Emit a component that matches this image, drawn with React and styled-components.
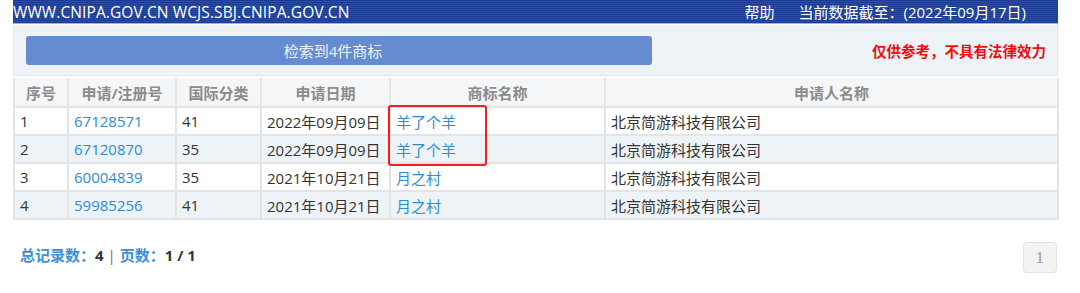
import React from "react";
import styled, { createGlobalStyle } from "styled-components";

const Global = createGlobalStyle`
  html, body { margin: 0; padding: 0; background: #fff; }
  body { font-family: "Open Sans", "Noto Sans CJK SC", sans-serif; }
`;

const Page = styled.div`
  width: 1045px;
  margin-left: 13px;
`;

const TopBar = styled.div`
  height: 23px;
  display: flex;
  align-items: center;
  justify-content: space-between;
  color: #fff;
  font-size: 15px;
  background: repeating-linear-gradient(
    to bottom,
    #1b3a93 0px,
    #1b3a93 1px,
    #2a4fa6 1px,
    #2a4fa6 2px
  );
  border-bottom: 1px solid #9fb2dc;
`;

const Sites = styled.span`
  white-space: nowrap;
  font-size: 15.5px;
  letter-spacing: 0.1px;
`;

const TopRight = styled.div`
  display: flex;
  gap: 24px;
  padding-right: 32px;
  white-space: nowrap;
`;

const SearchPanel = styled.div`
  margin-top: 1px;
  height: 51px;
  display: flex;
  align-items: center;
  justify-content: space-between;
  padding: 0 11px 0 12px;
  background: #eef3f8;
  border: 1px solid #e2e6ea;
  border-top: none;
  box-sizing: border-box;
`;

const ResultButton = styled.div`
  width: 626px;
  height: 29px;
  border-radius: 3px;
  background: #678bd0;
  color: #eef2fb;
  font-size: 15px;
  display: flex;
  align-items: center;
  justify-content: center;
  padding-right: 12px;
  box-sizing: border-box;
`;

const Disclaimer = styled.span`
  color: #f20c0c;
  font-size: 14.5px;
  font-weight: bold;
`;

const TableWrap = styled.div`
  position: relative;
  margin-top: 2px;
`;

const Table = styled.table`
  width: 1045px;
  border-collapse: collapse;
  table-layout: fixed;
  font-size: 15px;
`;

const Th = styled.th`
  height: 28px;
  padding: 0;
  background: #f4f6f7;
  color: #8c8c8c;
  font-weight: bold;
  font-size: 15px;
  text-align: center;
  border: 2px solid #e2e4e6;
  border-top: none;
`;

const Tr = styled.tr`
  background: ${(p) => (p.$alt ? "#eef3f8" : "#fff")};
`;

const Td = styled.td`
  height: 26px;
  padding: 0 0 0 5px;
  color: #333;
  border: 2px solid #e2e4e6;
  white-space: nowrap;
  overflow: hidden;
`;

const Link = styled.span`
  color: #2f8ad6;
`;

const Highlight = styled.div`
  position: absolute;
  left: 375px;
  top: 27px;
  width: 95px;
  height: 57px;
  border: 2px solid #f02020;
  border-radius: 3px;
  pointer-events: none;
`;

const Footer = styled.div`
  display: flex;
  justify-content: space-between;
  align-items: center;
  margin-top: 22px;
  padding-left: 7px;
`;

const Summary = styled.div`
  font-size: 15px;
  font-weight: bold;
  color: #3d8fd9;
  margin-top: -6px;
`;

const Value = styled.span`
  color: #333;
`;

const Sep = styled.span`
  color: #9a6a3a;
  font-weight: normal;
`;

const PageBtn = styled.div`
  width: 34px;
  height: 31px;
  margin-right: 1px;
  box-sizing: border-box;
  border: 1px solid #e2e2e2;
  border-radius: 4px;
  background: #f3f3f3;
  color: #a0a0a0;
  font-size: 15px;
  display: flex;
  align-items: center;
  justify-content: center;
  font-family: "DejaVu Serif", serif;
`;

const rows = [
  ["1", "67128571", "41", "2022年09月09日", "羊了个羊", "北京简游科技有限公司"],
  ["2", "67120870", "35", "2022年09月09日", "羊了个羊", "北京简游科技有限公司"],
  ["3", "60004839", "35", "2021年10月21日", "月之村", "北京简游科技有限公司"],
  ["4", "59985256", "41", "2021年10月21日", "月之村", "北京简游科技有限公司"],
];

const widths = [54, 108, 85, 129, 215, 453];
const heads = ["序号", "申请/注册号", "国际分类", "申请日期", "商标名称", "申请人名称"];

export default function App() {
  return (
    <Page>
      <Global />
      <TopBar>
        <Sites>WWW.CNIPA.GOV.CN WCJS.SBJ.CNIPA.GOV.CN</Sites>
        <TopRight>
          <span>帮助</span>
          <span>当前数据截至：(2022年09月17日)</span>
        </TopRight>
      </TopBar>
      <SearchPanel>
        <ResultButton>检索到4件商标</ResultButton>
        <Disclaimer>仅供参考，不具有法律效力</Disclaimer>
      </SearchPanel>
      <TableWrap>
        <Table>
          <colgroup>
            {widths.map((w, i) => (
              <col key={i} style={{ width: w }} />
            ))}
          </colgroup>
          <thead>
            <tr>
              {heads.map((h) => (
                <Th key={h}>{h}</Th>
              ))}
            </tr>
          </thead>
          <tbody>
            {rows.map((r, i) => (
              <Tr key={r[0]} $alt={i % 2 === 1}>
                <Td>{r[0]}</Td>
                <Td>
                  <Link>{r[1]}</Link>
                </Td>
                <Td>{r[2]}</Td>
                <Td>{r[3]}</Td>
                <Td>
                  <Link>{r[4]}</Link>
                </Td>
                <Td>{r[5]}</Td>
              </Tr>
            ))}
          </tbody>
        </Table>
        <Highlight />
      </TableWrap>
      <Footer>
        <Summary>
          总记录数：<Value>4</Value> <Sep>|</Sep> 页数：<Value>1 / 1</Value>
        </Summary>
        <PageBtn>1</PageBtn>
      </Footer>
    </Page>
  );
}
